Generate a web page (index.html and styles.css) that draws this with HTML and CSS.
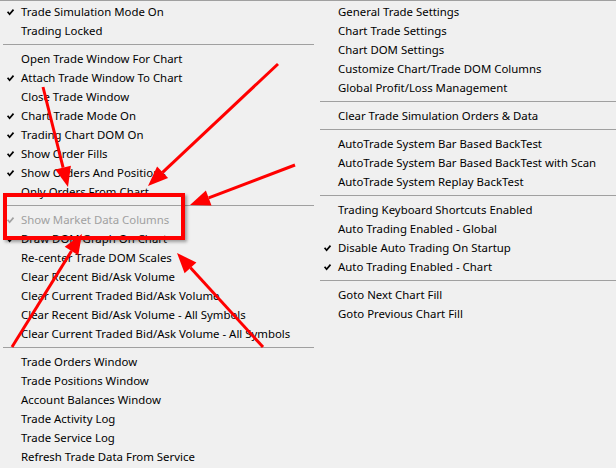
FILE: index.html
```html
<!DOCTYPE html>
<html lang="en">
<head>
  <meta charset="UTF-8">
  <title>Trade Menu</title>
  <link rel="stylesheet" href="styles.css">
</head>
<body>
  <div class="menu">
    <ul class="col col-left">
      <li class="item"><svg class="check" viewBox="0 0 7 6"><path d="M0.6 2.8 L2.6 5.2 L6.5 0.6"/></svg>Trade Simulation Mode On</li>
      <li class="item">Trading Locked</li>
      <li class="sep"></li>
      <li class="item">Open Trade Window For Chart</li>
      <li class="item"><svg class="check" viewBox="0 0 7 6"><path d="M0.6 2.8 L2.6 5.2 L6.5 0.6"/></svg>Attach Trade Window To Chart</li>
      <li class="item">Close Trade Window</li>
      <li class="item"><svg class="check" viewBox="0 0 7 6"><path d="M0.6 2.8 L2.6 5.2 L6.5 0.6"/></svg>Chart Trade Mode On</li>
      <li class="item"><svg class="check" viewBox="0 0 7 6"><path d="M0.6 2.8 L2.6 5.2 L6.5 0.6"/></svg>Trading Chart DOM On</li>
      <li class="item"><svg class="check" viewBox="0 0 7 6"><path d="M0.6 2.8 L2.6 5.2 L6.5 0.6"/></svg>Show Order Fills</li>
      <li class="item"><svg class="check" viewBox="0 0 7 6"><path d="M0.6 2.8 L2.6 5.2 L6.5 0.6"/></svg>Show Orders And Positions</li>
      <li class="item">Only Orders From Chart</li>
      <li class="sep"></li>
      <li class="item disabled"><svg class="check" viewBox="0 0 7 6"><path d="M0.6 2.8 L2.6 5.2 L6.5 0.6"/></svg>Show Market Data Columns</li>
      <li class="item"><svg class="check" viewBox="0 0 7 6"><path d="M0.6 2.8 L2.6 5.2 L6.5 0.6"/></svg>Draw DOM Graph On Chart</li>
      <li class="item">Re-center Trade DOM Scales</li>
      <li class="item">Clear Recent Bid/Ask Volume</li>
      <li class="item">Clear Current Traded Bid/Ask Volume</li>
      <li class="item">Clear Recent Bid/Ask Volume - All Symbols</li>
      <li class="item">Clear Current Traded Bid/Ask Volume - All Symbols</li>
      <li class="sep"></li>
      <li class="item">Trade Orders Window</li>
      <li class="item">Trade Positions Window</li>
      <li class="item">Account Balances Window</li>
      <li class="item">Trade Activity Log</li>
      <li class="item">Trade Service Log</li>
      <li class="item">Refresh Trade Data From Service</li>
    </ul>
    <ul class="col col-right">
      <li class="item">General Trade Settings</li>
      <li class="item">Chart Trade Settings</li>
      <li class="item">Chart DOM Settings</li>
      <li class="item">Customize Chart/Trade DOM Columns</li>
      <li class="item">Global Profit/Loss Management</li>
      <li class="sep"></li>
      <li class="item">Clear Trade Simulation Orders &amp; Data</li>
      <li class="sep"></li>
      <li class="item">AutoTrade System Bar Based BackTest</li>
      <li class="item">AutoTrade System Bar Based BackTest with Scan</li>
      <li class="item">AutoTrade System Replay BackTest</li>
      <li class="sep"></li>
      <li class="item">Trading Keyboard Shortcuts Enabled</li>
      <li class="item">Auto Trading Enabled - Global</li>
      <li class="item"><svg class="check" viewBox="0 0 7 6"><path d="M0.6 2.8 L2.6 5.2 L6.5 0.6"/></svg>Disable Auto Trading On Startup</li>
      <li class="item"><svg class="check" viewBox="0 0 7 6"><path d="M0.6 2.8 L2.6 5.2 L6.5 0.6"/></svg>Auto Trading Enabled - Chart</li>
      <li class="sep"></li>
      <li class="item">Goto Next Chart Fill</li>
      <li class="item">Goto Previous Chart Fill</li>
    </ul>
  </div>

  <!-- red markup drawn on top of the menu -->
  <div class="highlight"></div>
  <svg class="arrows" viewBox="0 0 616 468">
    <g class="arrow">
      <line x1="43" y1="87" x2="63.1" y2="167.6"/>
      <polygon points="68,187 55.3,169.5 70.9,165.7"/>
    </g>
    <g class="arrow">
      <line x1="278" y1="64" x2="162.6" y2="172.3"/>
      <polygon points="148,186 157.1,166.5 168.1,178.1"/>
    </g>
    <g class="arrow">
      <line x1="295" y1="165" x2="208.7" y2="197.9"/>
      <polygon points="190,205 205.9,190.4 211.5,205.4"/>
    </g>
    <g class="arrow">
      <line x1="12" y1="347" x2="71.5" y2="251"/>
      <polygon points="82,234 78.3,255.2 64.7,246.8"/>
    </g>
    <g class="arrow">
      <line x1="263" y1="347" x2="190.5" y2="267.8"/>
      <polygon points="177,253 196.4,262.4 184.6,273.2"/>
    </g>
  </svg>
</body>
</html>
```

FILE: styles.css
```css
/* Menu */
body {
  margin: 0;
  background-color: #f0f0f0;
  font-family: "Noto Sans", "Liberation Sans", sans-serif;
  font-size: 11.4px;
  color: #000;
  height: 468px;
  overflow: hidden;
}

.menu {
  display: flex;
  border-top: 1px solid #a0a0a0;
  padding-top: 2px;
}

.col {
  list-style: none;
  margin: 0;
  padding: 0;
}

.col-left {
  width: 317px;
}

.col-right {
  flex: 1;
}

.item {
  position: relative;
  height: 19px;
  line-height: 17px;
  padding-left: 21px;
  white-space: nowrap;
}

.item.disabled {
  color: #a0a0a0;
}

.check {
  position: absolute;
  left: 7px;
  top: 6px;
  width: 7px;
  height: 6px;
  overflow: visible;
}

.check path {
  fill: none;
  stroke: #000;
  stroke-width: 1.7;
}

.disabled .check path {
  stroke: #a0a0a0;
}

.sep {
  height: 9px;
  box-sizing: border-box;
  padding-top: 3px;
}

.sep::before {
  content: "";
  display: block;
  border-top: 1px solid #a0a0a0;
}

.col-left .sep::before {
  margin: 0 3px;
}

.col-right .sep::before {
  margin-left: 3px;
}

/* Annotations */
.highlight {
  position: absolute;
  left: 3px;
  top: 193px;
  width: 182px;
  height: 47px;
  box-sizing: border-box;
  border: 4px solid #ff0000;
  box-shadow: 2px 2px 3px rgba(0, 0, 0, 0.35);
}

.arrows {
  position: absolute;
  left: 0;
  top: 0;
  width: 616px;
  height: 468px;
  pointer-events: none;
}

.arrow line {
  stroke: #ff0000;
  stroke-width: 3;
}

.arrow polygon {
  fill: #ff0000;
}
```
